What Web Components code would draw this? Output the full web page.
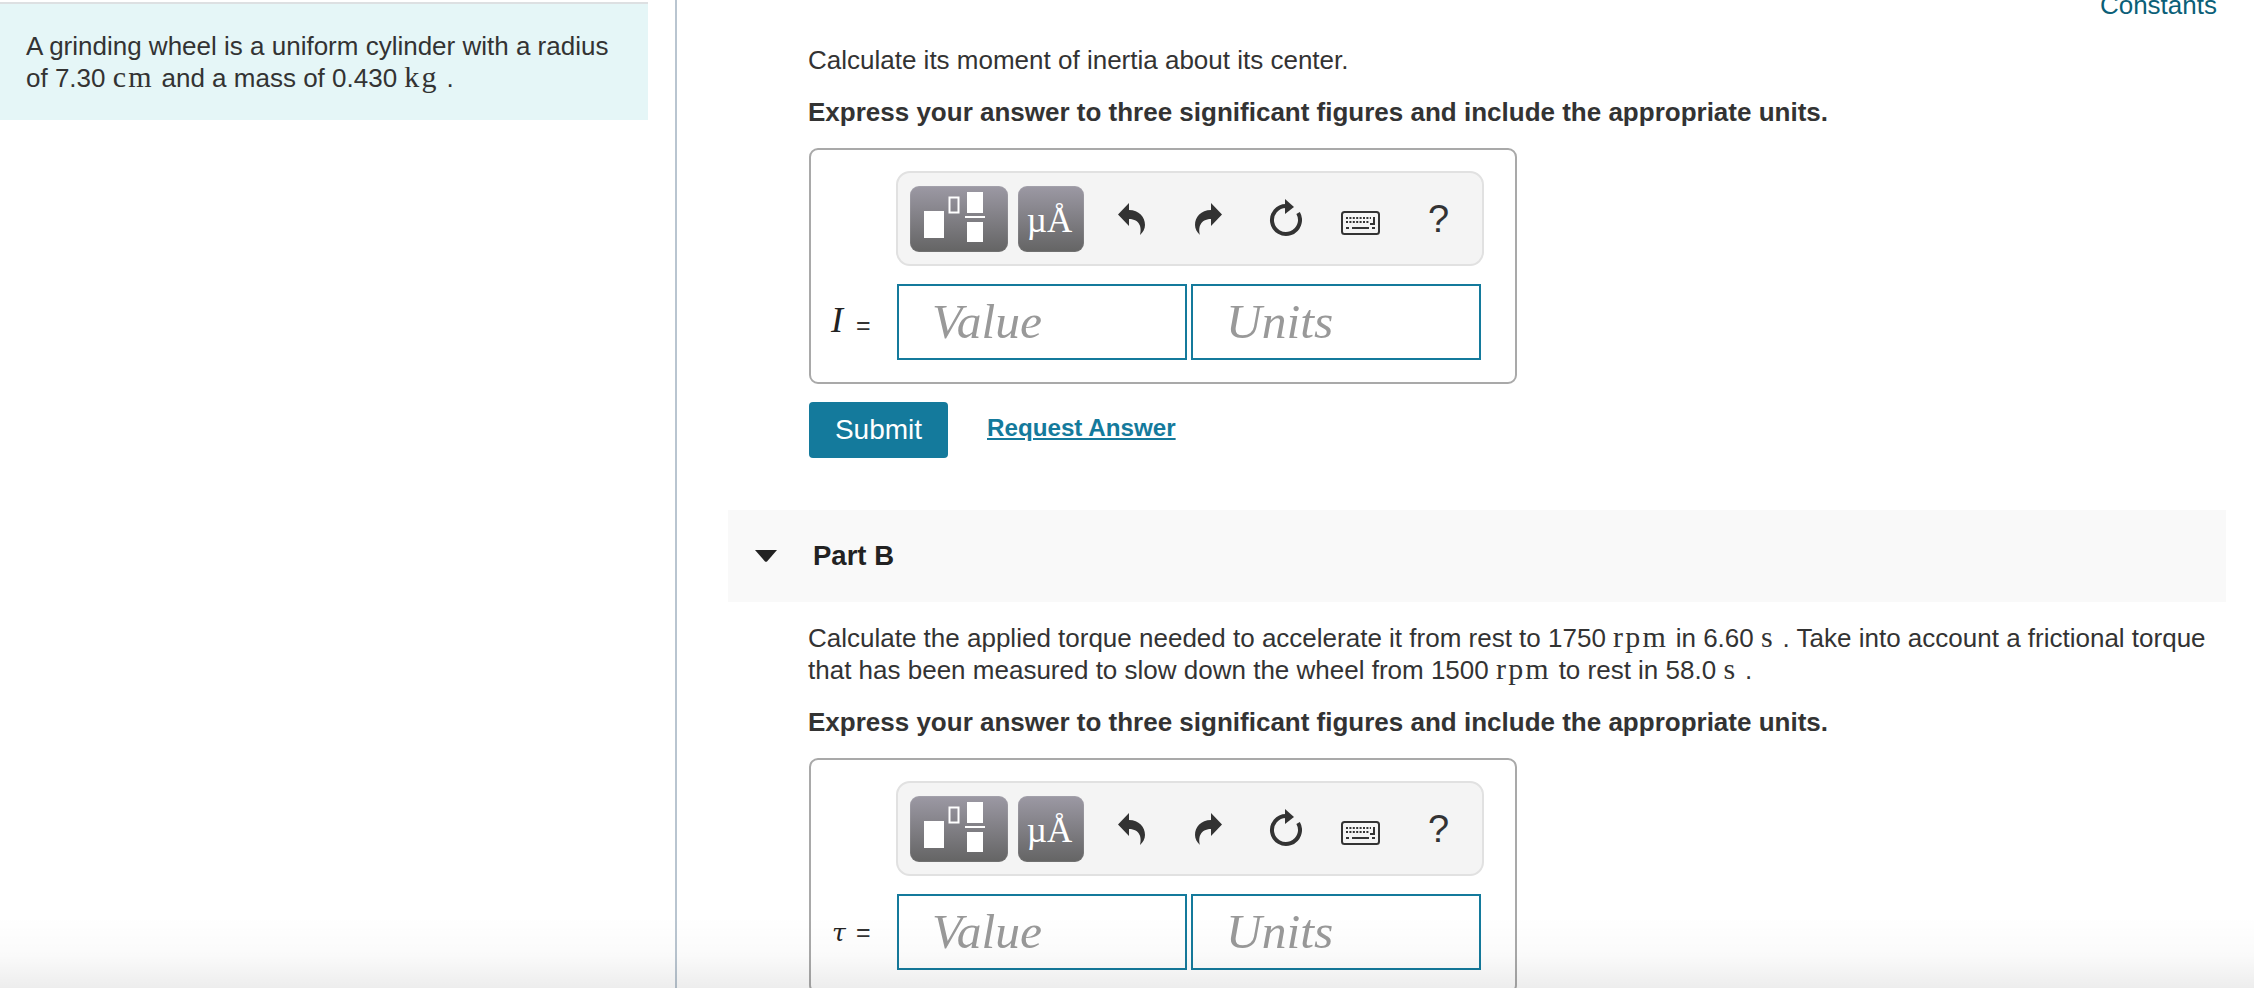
<!DOCTYPE html>
<html lang="en">
<head>
<meta charset="utf-8">
<title>Part B</title>
<style>
    html, body { margin: 0; padding: 0; height: 100%; overflow: hidden; background: #fff; }
    body { font-family: "Liberation Sans", Arial, sans-serif; font-size: 26px; line-height: 32px; color: #333; }
</style>
</head>
<body>
<quiz-page>
    <intro-panel slot="side">
        <div>A grinding wheel is a uniform cylinder with a radius</div>
        <div>of 7.30 <math-unit>cm</math-unit> and a mass of 0.430 <math-unit>kg</math-unit> .</div>
    </intro-panel>

    <constants-link>Constants</constants-link>
    <part-body>
        <prompt-text>Calculate its moment of inertia about its center.</prompt-text>
        <prompt-text strong>Express your answer to three significant figures and include the appropriate units.</prompt-text>
        <answer-box symbol="I"></answer-box>
        <submit-row></submit-row>
    </part-body>
    <part-header>Part B</part-header>
    <part-body second>
        <prompt-text>
            <div>Calculate the applied torque needed to accelerate it from rest to 1750 <math-unit>rpm</math-unit> in 6.60 <math-unit>s</math-unit> . Take into account a frictional torque</div>
            <div>that has been measured to slow down the wheel from 1500 <math-unit>rpm</math-unit> to rest in 58.0 <math-unit>s</math-unit> .</div>
        </prompt-text>
        <prompt-text strong>Express your answer to three significant figures and include the appropriate units.</prompt-text>
        <answer-box symbol="τ"></answer-box>
    </part-body>
</quiz-page>
<script>
class QuizPage extends HTMLElement {
    constructor() {
        super();
        this.shadowDOM = this.attachShadow({mode: 'open'});
        this.shadowDOM.innerHTML = `
        <style>
            :host { display: flex; height: 988px; overflow: hidden; position: relative; }
            .side { flex: 0 0 675px; box-sizing: border-box; padding-top: 2px; }
            .main {
                flex: 1;
                min-width: 0;
                border-left: 2px solid #b9c5d0;
                padding: 0 28px 0 51px;
            }
            .fade {
                position: absolute;
                left: 0;
                right: 0;
                bottom: 0;
                height: 72px;
                pointer-events: none;
                background: linear-gradient(to bottom, rgba(0,0,0,0), rgba(0,0,0,.02) 55%, rgba(0,0,0,.07));
            }
        </style>
        <div class="side"><slot name="side"></slot></div>
        <div class="main"><slot></slot></div>
        <div class="fade"></div>
        `;
    }
}

class IntroPanel extends HTMLElement {
    constructor() {
        super();
        this.shadowDOM = this.attachShadow({mode: 'open'});
        this.shadowDOM.innerHTML = `
        <style>
            :host {
                display: block;
                width: 648px;
                box-sizing: border-box;
                height: 118px;
                border-top: 2px solid #dde0e2;
                background: #e5f6f7;
                padding: 26px 0 0 26px;
                color: #333;
                white-space: nowrap;
            }
        </style>
        <slot></slot>
        `;
    }
}

class MathUnit extends HTMLElement {
    constructor() {
        super();
        this.shadowDOM = this.attachShadow({mode: 'open'});
        this.shadowDOM.innerHTML = `
        <style>
            :host {
                display: inline;
                font-family: "Liberation Serif", "Times New Roman", serif;
                font-size: 30px;
                letter-spacing: 2.2px;
                margin-right: -2px;
                line-height: 0;
            }
        </style>
        <slot></slot>
        `;
    }
}

class ConstantsLink extends HTMLElement {
    constructor() {
        super();
        this.shadowDOM = this.attachShadow({mode: 'open'});
        this.shadowDOM.innerHTML = `
        <style>
            :host {
                display: block;
                margin: -11px 9px 1px 0;
                text-align: right;
                color: #0b5f78;
            }
        </style>
        <slot></slot>
        `;
    }
}

class PartBody extends HTMLElement {
    constructor() {
        super();
        this.shadowDOM = this.attachShadow({mode: 'open'});
        this.shadowDOM.innerHTML = `
        <style>
            :host { display: block; padding: 22px 0 0 80px; white-space: nowrap; }
            :host([second]) { padding-top: 20px; }
        </style>
        <slot></slot>
        `;
    }
}

class PromptText extends HTMLElement {
    constructor() {
        super();
        this.shadowDOM = this.attachShadow({mode: 'open'});
        this.shadowDOM.innerHTML = `
        <style>
            :host { display: block; margin-bottom: 20px; }
            :host([strong]) { font-weight: bold; }
        </style>
        <slot></slot>
        `;
    }
}

class AnswerBox extends HTMLElement {
    constructor() {
        super();
        this.shadowDOM = this.attachShadow({mode: 'open'});
    }

    connectedCallback() {
        const symbol = this.getAttribute('symbol');
        this.shadowDOM.innerHTML = `
        <style>
            :host {
                display: block;
                box-sizing: border-box;
                width: 708px;
                height: 236px;
                margin-left: 1px;
                border: 2px solid #a9a9a9;
                border-radius: 9px;
                padding: 21px 0 0 85px;
            }
            .row { display: flex; margin-top: 18px; margin-left: -85px; align-items: center; }
            .label {
                width: 86px;
                box-sizing: border-box;
                padding-left: 20px;
                display: flex;
                align-items: baseline;
                margin-top: -1px;
            }
            .sym { width: 25px; font: italic 36px "Liberation Serif", serif; color: #222; transform: translateY(-2px); }
            .sym.tau { font: italic 25px "DejaVu Serif", serif; transform: none; padding-left: 1px; box-sizing: border-box; }
            .eq { font-size: 25px; color: #333; }
            .fields { display: flex; gap: 4px; }
        </style>
        <math-toolbar></math-toolbar>
        <div class="row">
            <div class="label"><span class="sym${symbol === 'τ' ? ' tau' : ''}">${symbol}</span><span class="eq">=</span></div>
            <div class="fields">
                <answer-field>Value</answer-field>
                <answer-field>Units</answer-field>
            </div>
        </div>
        `;
    }
}

class AnswerField extends HTMLElement {
    constructor() {
        super();
        this.shadowDOM = this.attachShadow({mode: 'open'});
        this.shadowDOM.innerHTML = `
        <style>
            :host {
                display: flex;
                align-items: center;
                box-sizing: border-box;
                width: 290px;
                height: 76px;
                border: 2px solid #147a9c;
                padding: 0 0 2px 33px;
                font: italic 49.5px "Liberation Serif", "Times New Roman", serif;
                color: #999;
                background: #fff;
            }
        </style>
        <slot></slot>
        `;
    }
}

class MathToolbar extends HTMLElement {
    constructor() {
        super();
        this.shadowDOM = this.attachShadow({mode: 'open'});
        this.shadowDOM.innerHTML = `
        <style>
            :host {
                display: flex;
                align-items: center;
                box-sizing: border-box;
                width: 588px;
                height: 95px;
                padding-left: 12px;
                background: #f4f4f4;
                border: 2px solid #e1e1e1;
                border-radius: 14px;
            }
            .btn {
                box-sizing: border-box;
                height: 66px;
                margin-right: 10px;
                border-radius: 9px;
                background: linear-gradient(to bottom, #9c99a4, #646464);
                box-shadow: inset 0 0 0 1px rgba(255,255,255,.08);
                display: flex;
                align-items: center;
                justify-content: center;
            }
            .tmpl { width: 98px; }
            .unit {
                width: 66px;
                color: #fff;
                font: 35px/66px "Liberation Serif", "Times New Roman", serif;
                padding: 4px 3px 0 0;
            }
            .cell {
                flex: 0 0 76px;
                display: flex;
                align-items: center;
                justify-content: center;
                color: #333;
            }
            .keys { padding-top: 8px; box-sizing: border-box; }
            .help { font-size: 38px; line-height: 40px; padding-left: 5px; box-sizing: border-box; }
            svg { display: block; }
        </style>
        <div class="btn tmpl">
            <svg width="98" height="66" viewBox="0 0 98 66">
                <rect x="14" y="25" width="20" height="27" fill="#fff"/>
                <rect x="39.5" y="11.5" width="9" height="15" fill="none" stroke="#fff" stroke-width="2"/>
                <rect x="57" y="6" width="16" height="21" fill="#fff"/>
                <rect x="55" y="30" width="20" height="2" fill="#fff"/>
                <rect x="57" y="36" width="16" height="20" fill="#fff"/>
            </svg>
        </div>
        <div class="btn unit">µÅ</div>
        <div class="cell">
            <svg width="28" height="32" viewBox="0 0 28 32">
                <path fill="#333" d="M0 11.5 L11 0 V7 C21 7 27 14 27 22 C27 26 25 29 22 32 C24 25 22 16 11 16 V23 Z"/>
            </svg>
        </div>
        <div class="cell">
            <svg width="28" height="32" viewBox="0 0 28 32">
                <path fill="#333" d="M28 11.5 L17 0 V7 C7 7 1 14 1 22 C1 26 3 29 6 32 C4 25 6 16 17 16 V23 Z"/>
            </svg>
        </div>
        <div class="cell">
            <svg width="36" height="40" viewBox="-20 -21 36 40">
                <path fill="none" stroke="#333" stroke-width="4" d="M0 -14 A14 14 0 1 0 12.1 -7"/>
                <path fill="#333" d="M-1 -21 L8 -13 L-1 -6 Z"/>
            </svg>
        </div>
        <div class="cell keys">
            <svg width="39" height="24" viewBox="0 0 39 24">
                <rect x="1" y="1" width="37" height="22" rx="2.5" fill="none" stroke="#333" stroke-width="2"/>
                <path fill="none" stroke="#333" stroke-width="2" stroke-dasharray="2 1.4" d="M5 7 H30 M5 11 H28"/>
                <path fill="none" stroke="#333" stroke-width="2" d="M33 6 V13 H29"/>
                <path fill="none" stroke="#333" stroke-width="2" d="M5 17 H8 M11 17 H28 M31 17 H34"/>
            </svg>
        </div>
        <div class="cell help">?</div>
        `;
    }
}

class SubmitRow extends HTMLElement {
    constructor() {
        super();
        this.shadowDOM = this.attachShadow({mode: 'open'});
        this.shadowDOM.innerHTML = `
        <style>
            :host { display: flex; align-items: flex-start; margin: 18px 0 0 1px; height: 56px; }
            .submit {
                box-sizing: border-box;
                width: 139px;
                height: 56px;
                border-radius: 4px;
                background: #147a9c;
                color: #fff;
                font-size: 28px;
                line-height: 56px;
                text-align: center;
            }
            .request {
                margin: 10px 0 0 39px;
                color: #147a9c;
                font-size: 24.2px;
                font-weight: bold;
                line-height: 32px;
                text-decoration: underline;
            }
        </style>
        <div class="submit">Submit</div>
        <div class="request">Request Answer</div>
        `;
    }
}

class PartHeader extends HTMLElement {
    constructor() {
        super();
        this.shadowDOM = this.attachShadow({mode: 'open'});
        this.shadowDOM.innerHTML = `
        <style>
            :host {
                display: flex;
                align-items: center;
                box-sizing: border-box;
                height: 92px;
                margin-top: 52px;
                background: #f9f9f9;
                padding-left: 27px;
                color: #222;
                font-size: 27.5px;
                font-weight: bold;
            }
            svg { display: block; margin-right: 36px; margin-top: -1px; }
        </style>
        <svg width="22" height="12" viewBox="0 0 22 12"><path fill="#222" d="M0 0 H22 L12 11.4 Q11 12 10 11.4 Z"/></svg>
        <slot></slot>
        `;
    }
}

customElements.define('quiz-page', QuizPage);
customElements.define('intro-panel', IntroPanel);
customElements.define('math-unit', MathUnit);
customElements.define('constants-link', ConstantsLink);
customElements.define('part-body', PartBody);
customElements.define('prompt-text', PromptText);
customElements.define('answer-box', AnswerBox);
customElements.define('answer-field', AnswerField);
customElements.define('math-toolbar', MathToolbar);
customElements.define('submit-row', SubmitRow);
customElements.define('part-header', PartHeader);
</script>
</body>
</html>
